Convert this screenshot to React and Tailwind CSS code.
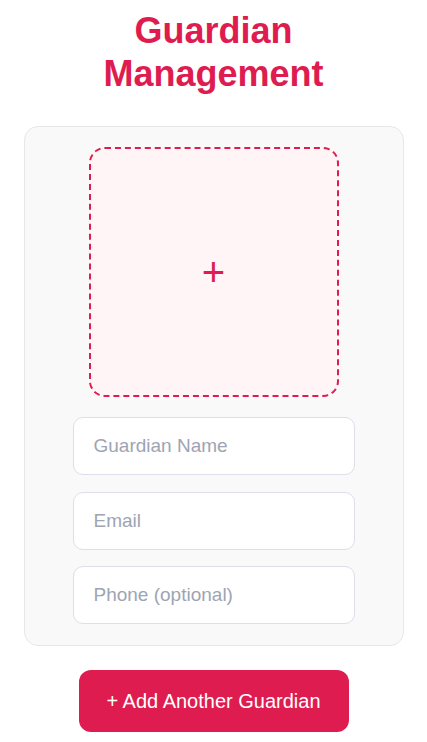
const FIELDS = [
	{ key: "name", type: "text", placeholder: "Guardian Name" },
	{ key: "email", type: "email", placeholder: "Email" },
	{ key: "phone", type: "tel", placeholder: "Phone (optional)" },
];

const GuardianCard = () => (
	<div className="mx-auto mt-[31px] flex w-[380px] flex-col items-center rounded-[14px] border border-[#e6e7eb] bg-[#f9f9fa] pt-[20px] pb-[21px]">
		<button
			type="button"
			className="flex h-[250px] w-[250px] items-center justify-center rounded-[16px] border-2 border-dashed border-[#de1c50] bg-[#fff4f6] text-[40px] leading-none text-[#de1c50]"
		>
			+
		</button>
		<div className="mt-[20px] flex w-[282px] flex-col gap-[16.5px]">
			{FIELDS.map((field) => (
				<input
					key={field.key}
					type={field.type}
					placeholder={field.placeholder}
					className="h-[58px] w-full rounded-[10px] border border-[#dcdfe9] bg-white px-[20px] text-[19px] text-gray-800 outline-none placeholder:text-[#9ea4b3]"
				/>
			))}
		</div>
	</div>
);

export default function App() {
	return (
		<div
			className="min-h-screen bg-white pt-[9px] pb-[12px]"
			style={{ fontFamily: '"Liberation Sans", Arial, sans-serif' }}
		>
			<h1 className="text-center text-[36px] leading-[43px] font-bold text-[#de1c50]">
				Guardian
				<br />
				Management
			</h1>
			<GuardianCard />
			<div className="mt-[24px] flex justify-center">
				<button
					type="button"
					className="h-[62px] w-[270px] rounded-[12px] bg-[#de1c50] text-[20px] text-white"
				>
					+ Add Another Guardian
				</button>
			</div>
		</div>
	);
}
